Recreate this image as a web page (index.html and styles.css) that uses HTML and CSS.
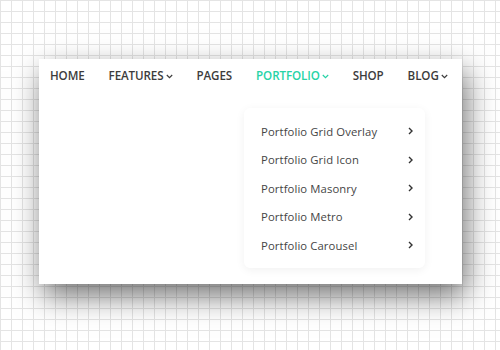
FILE: index.html
```html
<!DOCTYPE html>
<html>
<head>
<meta charset="utf-8">
<link rel="stylesheet" href="styles.css">
</head>
<body>
<div class="panel">
  <nav class="nav">
    <a class="nav-item">Home</a>
    <a class="nav-item">Features<svg class="caret" width="7" height="5" viewBox="0 0 7 5"><polyline points="0.8,1 3.5,3.6 6.2,1" fill="none" stroke="currentColor" stroke-width="1.2"/></svg></a>
    <a class="nav-item">Pages</a>
    <a class="nav-item active">Portfolio<svg class="caret" width="7" height="5" viewBox="0 0 7 5"><polyline points="0.8,1 3.5,3.6 6.2,1" fill="none" stroke="currentColor" stroke-width="1.2"/></svg></a>
    <a class="nav-item">Shop</a>
    <a class="nav-item">Blog<svg class="caret" width="7" height="5" viewBox="0 0 7 5"><polyline points="0.8,1 3.5,3.6 6.2,1" fill="none" stroke="currentColor" stroke-width="1.2"/></svg></a>
  </nav>
  <ul class="dropdown">
    <li class="dd-item"><span>Portfolio Grid Overlay</span><svg class="arrow" width="5" height="8" viewBox="0 0 5 8"><polyline points="1,1 4,4 1,7" fill="none" stroke="currentColor" stroke-width="1.4"/></svg></li>
    <li class="dd-item"><span>Portfolio Grid Icon</span><svg class="arrow" width="5" height="8" viewBox="0 0 5 8"><polyline points="1,1 4,4 1,7" fill="none" stroke="currentColor" stroke-width="1.4"/></svg></li>
    <li class="dd-item"><span>Portfolio Masonry</span><svg class="arrow" width="5" height="8" viewBox="0 0 5 8"><polyline points="1,1 4,4 1,7" fill="none" stroke="currentColor" stroke-width="1.4"/></svg></li>
    <li class="dd-item"><span>Portfolio Metro</span><svg class="arrow" width="5" height="8" viewBox="0 0 5 8"><polyline points="1,1 4,4 1,7" fill="none" stroke="currentColor" stroke-width="1.4"/></svg></li>
    <li class="dd-item"><span>Portfolio Carousel</span><svg class="arrow" width="5" height="8" viewBox="0 0 5 8"><polyline points="1,1 4,4 1,7" fill="none" stroke="currentColor" stroke-width="1.4"/></svg></li>
  </ul>
</div>
</body>
</html>
```
FILE: styles.css
```css
html, body {
  margin: 0;
  padding: 0;
}
body {
  width: 500px;
  height: 350px;
  overflow: hidden;
  background-color: #fff;
  background-image:
    linear-gradient(to right, #e4e4e4 1px, transparent 1px),
    linear-gradient(to bottom, #e4e4e4 1px, transparent 1px);
  background-size: 11px 11px;
  font-family: "Open Sans", "Liberation Sans", sans-serif;
  padding-top: 59px;
  padding-left: 39px;
  box-sizing: border-box;
}
.panel {
  position: relative;
  width: 423px;
  height: 225px;
  background: #fff;
  box-shadow: 4px 12px 28px rgba(0, 0, 0, 0.55);
}
.nav {
  display: flex;
  align-items: center;
  gap: 24px;
  padding-left: 11px;
  height: 33px;
}
.nav-item {
  display: flex;
  align-items: center;
  font-size: 11.6px;
  font-weight: 600;
  text-transform: uppercase;
  color: #3c3c3c;
  letter-spacing: -0.1px;
  white-space: nowrap;
}
.nav-item.active {
  color: #27d3a6;
}
.caret {
  margin-left: 2px;
  margin-top: 1px;
}
.dropdown {
  position: absolute;
  left: 205px;
  top: 49px;
  width: 181px;
  margin: 0;
  padding: 9px 0 8px;
  list-style: none;
  background: #fff;
  border-radius: 6px;
  box-shadow: 0 2px 10px rgba(0, 0, 0, 0.06);
  box-sizing: border-box;
}
.dd-item {
  display: flex;
  align-items: center;
  justify-content: space-between;
  height: 28.5px;
  padding: 0 12px 0 17px;
  font-size: 11.3px;
  color: #454545;
  letter-spacing: 0.1px;
}
.arrow {
  color: #333;
}
```
